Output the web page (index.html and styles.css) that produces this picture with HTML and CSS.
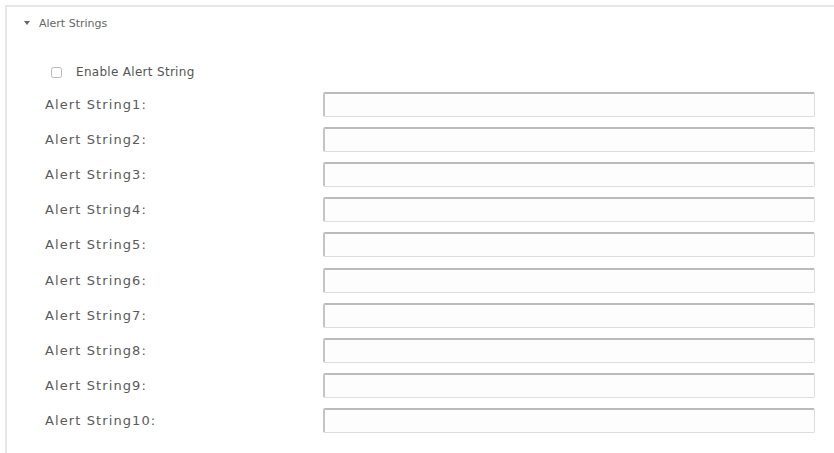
FILE: index.html
```html
<!DOCTYPE html>
<html lang="en">
<head>
  <meta charset="UTF-8">
  <title>Alert Strings</title>
  <link rel="stylesheet" href="styles.css">
</head>
<body>
  <div class="panel">
    <div class="panel-title"><span class="caret"></span>Alert Strings</div>

    <label class="enable">
      <input type="checkbox" id="enableAlert">
      Enable Alert String
    </label>

    <div class="rows">
      <div class="row"><label for="as1">Alert String1:</label><input type="text" id="as1"></div>
      <div class="row"><label for="as2">Alert String2:</label><input type="text" id="as2"></div>
      <div class="row"><label for="as3">Alert String3:</label><input type="text" id="as3"></div>
      <div class="row"><label for="as4">Alert String4:</label><input type="text" id="as4"></div>
      <div class="row"><label for="as5">Alert String5:</label><input type="text" id="as5"></div>
      <div class="row"><label for="as6">Alert String6:</label><input type="text" id="as6"></div>
      <div class="row"><label for="as7">Alert String7:</label><input type="text" id="as7"></div>
      <div class="row"><label for="as8">Alert String8:</label><input type="text" id="as8"></div>
      <div class="row"><label for="as9">Alert String9:</label><input type="text" id="as9"></div>
      <div class="row"><label for="as10">Alert String10:</label><input type="text" id="as10"></div>
    </div>
  </div>
</body>
</html>
```

FILE: styles.css
```css
body {
  font-family: "DejaVu Sans", Verdana, sans-serif;
  font-size: 12px;
  color: #555;
  background-color: white;
  margin: 0;
  padding: 5px 0 0 5px;
}
.panel {
  border: 2px solid #e6e6e6;
  border-right: none;
  height: 460px;
}
.panel-title {
  display: flex;
  align-items: center;
  height: 32px;
  padding-left: 17px;
  font-size: 11px;
  color: #666;
}
.caret {
  width: 0;
  height: 0;
  border-left: 3px solid transparent;
  border-right: 3px solid transparent;
  border-top: 4px solid #666;
  margin-right: 9px;
}
.enable {
  display: flex;
  align-items: center;
  margin: 22px 0 0 44px;
  height: 22px;
  letter-spacing: 0.3px;
}
.enable input {
  width: 11px;
  height: 11px;
  margin: 0 14px 0 0;
  opacity: 0.5;
}
.rows {
  margin-top: 4px;
}
.row {
  display: flex;
  align-items: center;
  height: 35.1px;
  padding-left: 38px;
}
.row label {
  width: 278px;
  font-size: 13px;
  letter-spacing: 1.1px;
  color: #5a5a5a;
}
.row input {
  width: 492px;
  height: 25px;
  box-sizing: border-box;
  border: 1px solid #ddd;
  border-top: 2px solid #bbb;
  border-left: 2px solid #c4c4c4;
  border-radius: 2px;
  background: #fdfdfd;
  margin: 0;
}
```
